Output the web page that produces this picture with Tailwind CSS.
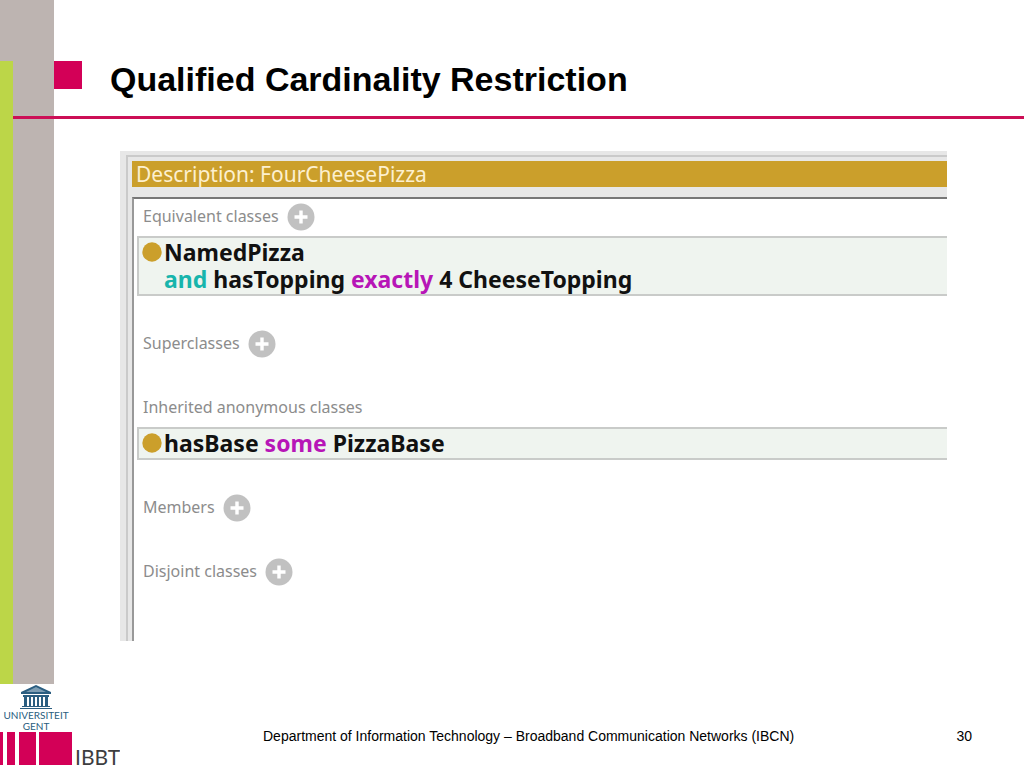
<!DOCTYPE html>
<html lang="en">
<head>
  <meta charset="UTF-8">
  <meta name="viewport" content="width=device-width, initial-scale=1.0">
  <title>Qualified Cardinality Restriction</title>
  <script src="https://cdn.jsdelivr.net/npm/@tailwindcss/browser@4"></script>
</head>
<body class="bg-white text-black min-h-screen flex flex-col font-['Liberation_Sans',Arial,sans-serif]">

  <div class="flex flex-1">
    <!-- Side bar -->
    <div class="w-[54px] shrink-0 bg-[#bdb4b1] pt-[61px] flex">
      <div class="w-[13px] bg-[#bcd648]"></div>
    </div>

    <div class="flex-1 min-w-0">
      <!-- Title -->
      <header class="relative h-[119px] pt-[61px] flex items-start">
        <div class="w-7 h-7 bg-[#d30057]"></div>
        <h1 class="ml-7 text-[34px] leading-9 font-bold">Qualified Cardinality Restriction</h1>
        <div class="absolute -left-[41px] right-0 bottom-0 h-[3px] bg-[#cc0f56]"></div>
      </header>

      <!-- Class description -->
      <main class="mt-8 ml-[66px] mr-[77px] bg-[#e7e7e7] pt-1 pl-[6px] font-['Noto_Sans',sans-serif]">
        <div class="border-t-2 border-l-2 border-[#cacaca] pt-1 pl-1">
          <h2 class="bg-[#cb9f2b] text-[#fdf0cf] h-[26px] leading-[26px] pl-1 text-[21px]">Description: FourCheesePizza</h2>
          <div class="mt-[10px] bg-white border-t-2 border-l-2 border-t-[#777] border-l-[#999] pl-[3px] pt-1 h-[444px]">

            <section>
              <div class="flex items-center h-7 gap-2 pl-[6px]">
                <h3 class="pb-[2px] text-[16px] leading-5 text-[#8c8c8c]">Equivalent classes</h3>
                <button type="button" aria-label="Add equivalent class">
                  <svg class="block w-7 h-7" viewBox="0 0 28 28"><circle cx="14" cy="14" r="13.5" fill="#c1c1c1"/><path d="M14 7.5v13M7.5 14h13" stroke="#fff" stroke-width="3.4"/></svg>
                </button>
              </div>
              <div class="mt-[5px] border-2 border-r-0 border-[#c9cbc9] bg-[#eff4ef] pl-[3px] py-px flex items-start">
                <svg class="block w-5 h-5 mt-[3px]" viewBox="0 0 20 20"><circle cx="10" cy="10" r="9.7" fill="#cb9f2b"/></svg>
                <p class="ml-[2px] text-[23px] leading-[27px] font-bold text-[#111]">NamedPizza<br><span class="text-[#17b5ac]">and</span> hasTopping <span class="text-[#b715b7]">exactly</span> 4 CheeseTopping</p>
              </div>
            </section>

            <section class="mt-[34px]">
              <div class="flex items-center h-7 gap-2 pl-[6px]">
                <h3 class="pb-[2px] text-[16px] leading-5 text-[#8c8c8c]">Superclasses</h3>
                <button type="button" aria-label="Add superclass">
                  <svg class="block w-7 h-7" viewBox="0 0 28 28"><circle cx="14" cy="14" r="13.5" fill="#c1c1c1"/><path d="M14 7.5v13M7.5 14h13" stroke="#fff" stroke-width="3.4"/></svg>
                </button>
              </div>
            </section>

            <section class="mt-9">
              <div class="flex items-center h-7 pl-[6px]">
                <h3 class="pb-[2px] text-[16px] leading-5 text-[#8c8c8c]">Inherited anonymous classes</h3>
              </div>
              <div class="mt-[5px] border-2 border-r-0 border-[#c9cbc9] bg-[#eff4ef] pl-[3px] py-px flex items-start">
                <svg class="block w-5 h-5 mt-[3px]" viewBox="0 0 20 20"><circle cx="10" cy="10" r="9.7" fill="#cb9f2b"/></svg>
                <p class="ml-[2px] text-[23px] leading-[27px] font-bold text-[#111]">hasBase <span class="text-[#b715b7]">some</span> PizzaBase</p>
              </div>
            </section>

            <section class="mt-[34px]">
              <div class="flex items-center h-7 gap-2 pl-[6px]">
                <h3 class="pb-[2px] text-[16px] leading-5 text-[#8c8c8c]">Members</h3>
                <button type="button" aria-label="Add member">
                  <svg class="block w-7 h-7" viewBox="0 0 28 28"><circle cx="14" cy="14" r="13.5" fill="#c1c1c1"/><path d="M14 7.5v13M7.5 14h13" stroke="#fff" stroke-width="3.4"/></svg>
                </button>
              </div>
            </section>

            <section class="mt-9">
              <div class="flex items-center h-7 gap-2 pl-[6px]">
                <h3 class="pb-[2px] text-[16px] leading-5 text-[#8c8c8c]">Disjoint classes</h3>
                <button type="button" aria-label="Add disjoint class">
                  <svg class="block w-7 h-7" viewBox="0 0 28 28"><circle cx="14" cy="14" r="13.5" fill="#c1c1c1"/><path d="M14 7.5v13M7.5 14h13" stroke="#fff" stroke-width="3.4"/></svg>
                </button>
              </div>
            </section>

          </div>
        </div>
      </main>
    </div>
  </div>

  <!-- Footer -->
  <footer class="h-[84px] flex items-start">
    <div class="w-[120px] shrink-0">
      <svg class="block w-[120px] h-[84px]" viewBox="0 0 120 84" role="img" aria-label="Universiteit Gent, IBBT">
        <g fill="#2a5d80">
          <path d="M36 1 51 8v2H21V8z"/>
          <path d="M23 11h26v2H23z"/>
          <path d="M24 13h3v9h-3zM29 13h2v9h-2zM33 13h2v9h-2zM37 13h2v9h-2zM41 13h2v9h-2zM45 13h3v9h-3z"/>
          <path d="M22 22h28v1H22zM20 24h32v1H20z"/>
        </g>
        <path d="M36 3 46 8H26z" fill="#7d9db3"/>
        <g fill="#2a5d80" font-family="Lato, sans-serif" font-size="10" text-anchor="middle">
          <text x="36" y="35">UNIVERSITEIT</text>
          <text x="36" y="46">GENT</text>
        </g>
        <path d="M0 48h3v33H0zM7 48h8v33H7zM19 48h17v33H19zM39 48h33v33H39z" fill="#d30057"/>
        <text x="75" y="81" fill="#3d3d3f" font-family="Lato, sans-serif" font-size="21">IBBT</text>
      </svg>
    </div>
    <div class="flex-1 flex justify-between pt-[42px] pl-[143px] pr-[52px] text-[14px] leading-5">
      <p>Department of Information Technology – Broadband Communication Networks (IBCN)</p>
      <p>30</p>
    </div>
  </footer>

</body>
</html>
